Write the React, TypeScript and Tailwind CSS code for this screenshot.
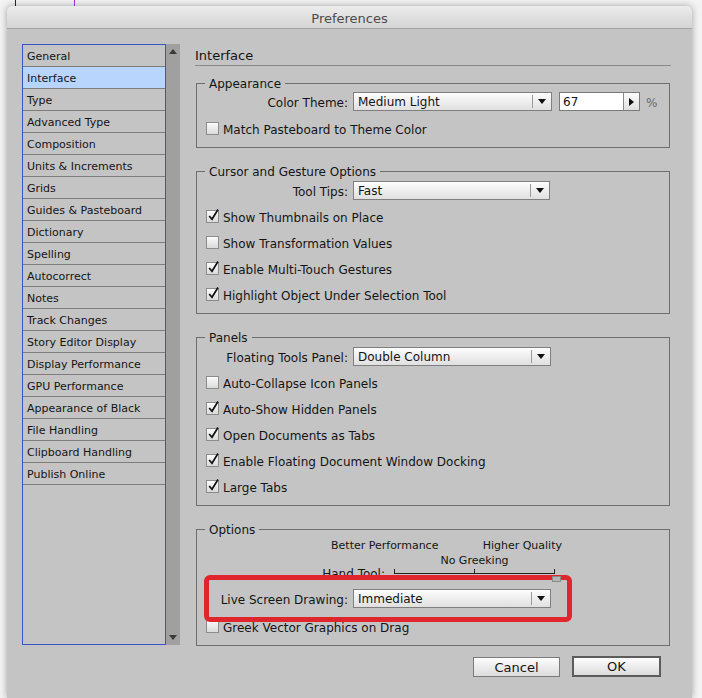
import type { ReactNode } from "react";

const categories = [
  "General",
  "Interface",
  "Type",
  "Advanced Type",
  "Composition",
  "Units & Increments",
  "Grids",
  "Guides & Pasteboard",
  "Dictionary",
  "Spelling",
  "Autocorrect",
  "Notes",
  "Track Changes",
  "Story Editor Display",
  "Display Performance",
  "GPU Performance",
  "Appearance of Black",
  "File Handling",
  "Clipboard Handling",
  "Publish Online",
];

function Check({ checked, label }: { checked?: boolean; label: string }) {
  return (
    <div className="ml-[9px] flex h-[16px] items-center gap-[4px]">
      <span className="relative h-[13px] w-[13px] shrink-0 border border-[#8c8c8c] bg-gradient-to-b from-[#fbfbfb] to-[#dadada]">
        {checked && (
          <svg className="absolute -top-[3px] left-[0px]" width="13" height="14" viewBox="0 0 13 14">
            <path d="M2.2 8 L5 11.3 L11 1.5" fill="none" stroke="#111" strokeWidth="1.7" />
          </svg>
        )}
      </span>
      <span className="pt-[3px] leading-[16px]">{label}</span>
    </div>
  );
}

function Arrow() {
  return (
    <svg width="8" height="5" viewBox="0 0 8 5">
      <path d="M0 0H8L4 5Z" fill="#111" />
    </svg>
  );
}

function Select({ value, w }: { value: string; w: string }) {
  return (
    <div className={`flex h-[19px] ${w} items-center border border-[#7f7f7f] bg-gradient-to-b from-[#fdfdfd] to-[#e0e0e0]`}>
      <span className="h-[17px] flex-1 pl-[4px] pt-[2px] leading-[15px]">{value}</span>
      <span className="h-[13px] w-px bg-[#9a9a9a]" />
      <span className="flex w-[18px] justify-center">
        <Arrow />
      </span>
    </div>
  );
}

function Field({ label, children }: { label: string; children: ReactNode }) {
  return (
    <div className="flex h-[19px] items-center">
      <span className="w-[156px] pr-[5px] pt-[3px] text-right leading-[16px]">{label}</span>
      {children}
    </div>
  );
}

function Group({ title, h, children }: { title: string; h: string; children: ReactNode }) {
  return (
    <div className={`${h} mx-px border border-[#6e6e6e]`}>
      <div className="-mt-[9px] ml-[8px] h-[16px] w-fit bg-[#c4c4c4] px-[4px] pt-px leading-[16px]">{title}</div>
      {children}
    </div>
  );
}

function Button({ label, primary }: { label: string; primary?: boolean }) {
  return (
    <button
      className={
        primary
          ? "h-[21px] w-[89px] border-2 border-[#5c5c5c] bg-gradient-to-b from-[#fdfdfd] to-[#dcdcdc] pt-px text-[13px] leading-[16px]"
          : "h-[20px] w-[87px] border border-[#7a7a7a] bg-gradient-to-b from-[#fdfdfd] to-[#dcdcdc] pt-px text-[13px] leading-[17px]"
      }
    >
      {label}
    </button>
  );
}

export default function App() {
  return (
    <div className="h-[698px] w-[702px] overflow-hidden bg-[#f3f3f3] font-['DejaVu_Sans',sans-serif] text-[12px] text-[#141414]">
      {/* backdrop strip above the dialog */}
      <div className="flex h-[6px]">
        <div className="ml-[15px] h-full w-px bg-[#222]" />
        <div className="ml-[58px] h-full w-px bg-[#9b30c4]" />
      </div>

      <div className="ml-[7px] flex h-[692px] w-[685px] flex-col rounded-t-[5px] bg-[#c4c4c4] shadow-[0_0_7px_rgba(0,0,0,0.35)]">
        <div className="flex h-[23px] items-center justify-center rounded-t-[5px] border-b border-[#a3a3a3] bg-gradient-to-b from-[#ececec] to-[#d4d4d4] pt-[3px] text-[13px] text-[#4b4b4b]">
          Preferences
        </div>

        <div className="flex pl-[15px] pt-[15px]">
          {/* category list */}
          <div className="flex h-[601px]">
            <div className="w-[144px] border border-[#3556c4] bg-[#c4c4c4]">
              {categories.map((c) => (
                <div
                  key={c}
                  className={`h-[22px] border-b border-[#7e7e7e] pl-[4px] pt-px text-[11px] leading-[21px] ${
                    c === "Interface" ? "bg-[#b8d6fd]" : ""
                  }`}
                >
                  {c}
                </div>
              ))}
            </div>
            <div className="flex w-[14px] flex-col items-center justify-between bg-[#a0a0a0] py-[5px]">
              <svg width="8" height="5" viewBox="0 0 8 5">
                <path d="M0 5H8L4 0Z" fill="#3a3a3a" />
              </svg>
              <svg width="8" height="5" viewBox="0 0 8 5">
                <path d="M0 0H8L4 5Z" fill="#3a3a3a" />
              </svg>
            </div>
          </div>

          {/* settings pane */}
          <div className="ml-[15px] w-[476px] pt-[3px] text-[12px]">
            <div className="h-[19px] border-b border-[#8a8a8a] pt-px text-[13px] leading-[16px]">Interface</div>

            <div className="mt-[17px]">
              <Group title="Appearance" h="h-[65px]">
                <div className="mt-px">
                  <Field label="Color Theme:">
                    <Select value="Medium Light" w="w-[199px]" />
                    <div className="ml-[7px] flex h-[19px] w-[81px] border border-[#7a7a7a]">
                      <span className="flex-1 bg-white pl-[3px] pt-[2px] leading-[15px]">67</span>
                      <span className="flex w-[16px] items-center justify-center border-l border-[#8a8a8a] bg-gradient-to-b from-[#fdfdfd] to-[#e0e0e0]">
                        <svg width="5" height="8" viewBox="0 0 5 8">
                          <path d="M0 0V8L5 4Z" fill="#111" />
                        </svg>
                      </span>
                    </div>
                    <span className="ml-[6px] pt-[3px] text-[#6a6a6a]">%</span>
                  </Field>
                </div>
                <div className="mt-[9px]">
                  <Check label="Match Pasteboard to Theme Color" />
                </div>
              </Group>
            </div>

            <div className="mt-[23px]">
              <Group title="Cursor and Gesture Options" h="h-[143px]">
                <div className="mt-[2px]">
                  <Field label="Tool Tips:">
                    <Select value="Fast" w="w-[197px]" />
                  </Field>
                </div>
                <div className="mt-[8px] flex flex-col gap-[10px]">
                  <Check checked label="Show Thumbnails on Place" />
                  <Check label="Show Transformation Values" />
                  <Check checked label="Enable Multi-Touch Gestures" />
                  <Check checked label="Highlight Object Under Selection Tool" />
                </div>
              </Group>
            </div>

            <div className="mt-[23px]">
              <Group title="Panels" h="h-[169px]">
                <div className="mt-[2px]">
                  <Field label="Floating Tools Panel:">
                    <Select value="Double Column" w="w-[198px]" />
                  </Field>
                </div>
                <div className="mt-[8px] flex flex-col gap-[10px]">
                  <Check label="Auto-Collapse Icon Panels" />
                  <Check checked label="Auto-Show Hidden Panels" />
                  <Check checked label="Open Documents as Tabs" />
                  <Check checked label="Enable Floating Document Window Docking" />
                  <Check checked label="Large Tabs" />
                </div>
              </Group>
            </div>

            <div className="mt-[23px]">
              <Group title="Options" h="h-[117px]">
                <div className="ml-[134px] mt-[2px] flex h-[12px] w-[231px] justify-between pt-px text-[11px] leading-[12px]">
                  <span>Better Performance</span>
                  <span>Higher Quality</span>
                </div>
                <div className="ml-[197px] mt-[3px] h-[12px] w-[161px] pt-px text-center text-[11px] leading-[12px]">
                  No Greeking
                </div>
                <div className="flex h-[12px]">
                  <span className="w-[188px] pt-px text-right leading-[14px]">Hand Tool:</span>
                  <div className="relative ml-[9px] mt-[3px] flex">
                    <div className="h-[5px] w-[80px] border-b border-l border-[#222]" />
                    <div className="h-[5px] w-[81px] border-x border-b border-[#222]" />
                    <div className="absolute -right-[6px] top-[7px] z-20 h-[6px] w-[9px] border border-[#8a8a8a] bg-[#b5b5b5]" />
                  </div>
                </div>

                <div className="relative z-10 ml-[7px] -mt-[3px] flex h-[47px] w-[368px] items-center rounded-[6px] border-[5px] border-[#e1252c] bg-[#c4c4c4]">
                  <span className="w-[144px] pr-[5px] pt-[3px] text-right leading-[16px]">Live Screen Drawing:</span>
                  <Select value="Immediate" w="w-[198px]" />
                </div>
                <div className="-mt-[4px]">
                  <Check label="Greek Vector Graphics on Drag" />
                </div>
              </Group>
            </div>
          </div>
        </div>

        <div className="mt-[10px] flex items-end justify-end gap-[12px] pr-[31px]">
          <Button label="Cancel" />
          <Button label="OK" primary />
        </div>
      </div>
    </div>
  );
}
